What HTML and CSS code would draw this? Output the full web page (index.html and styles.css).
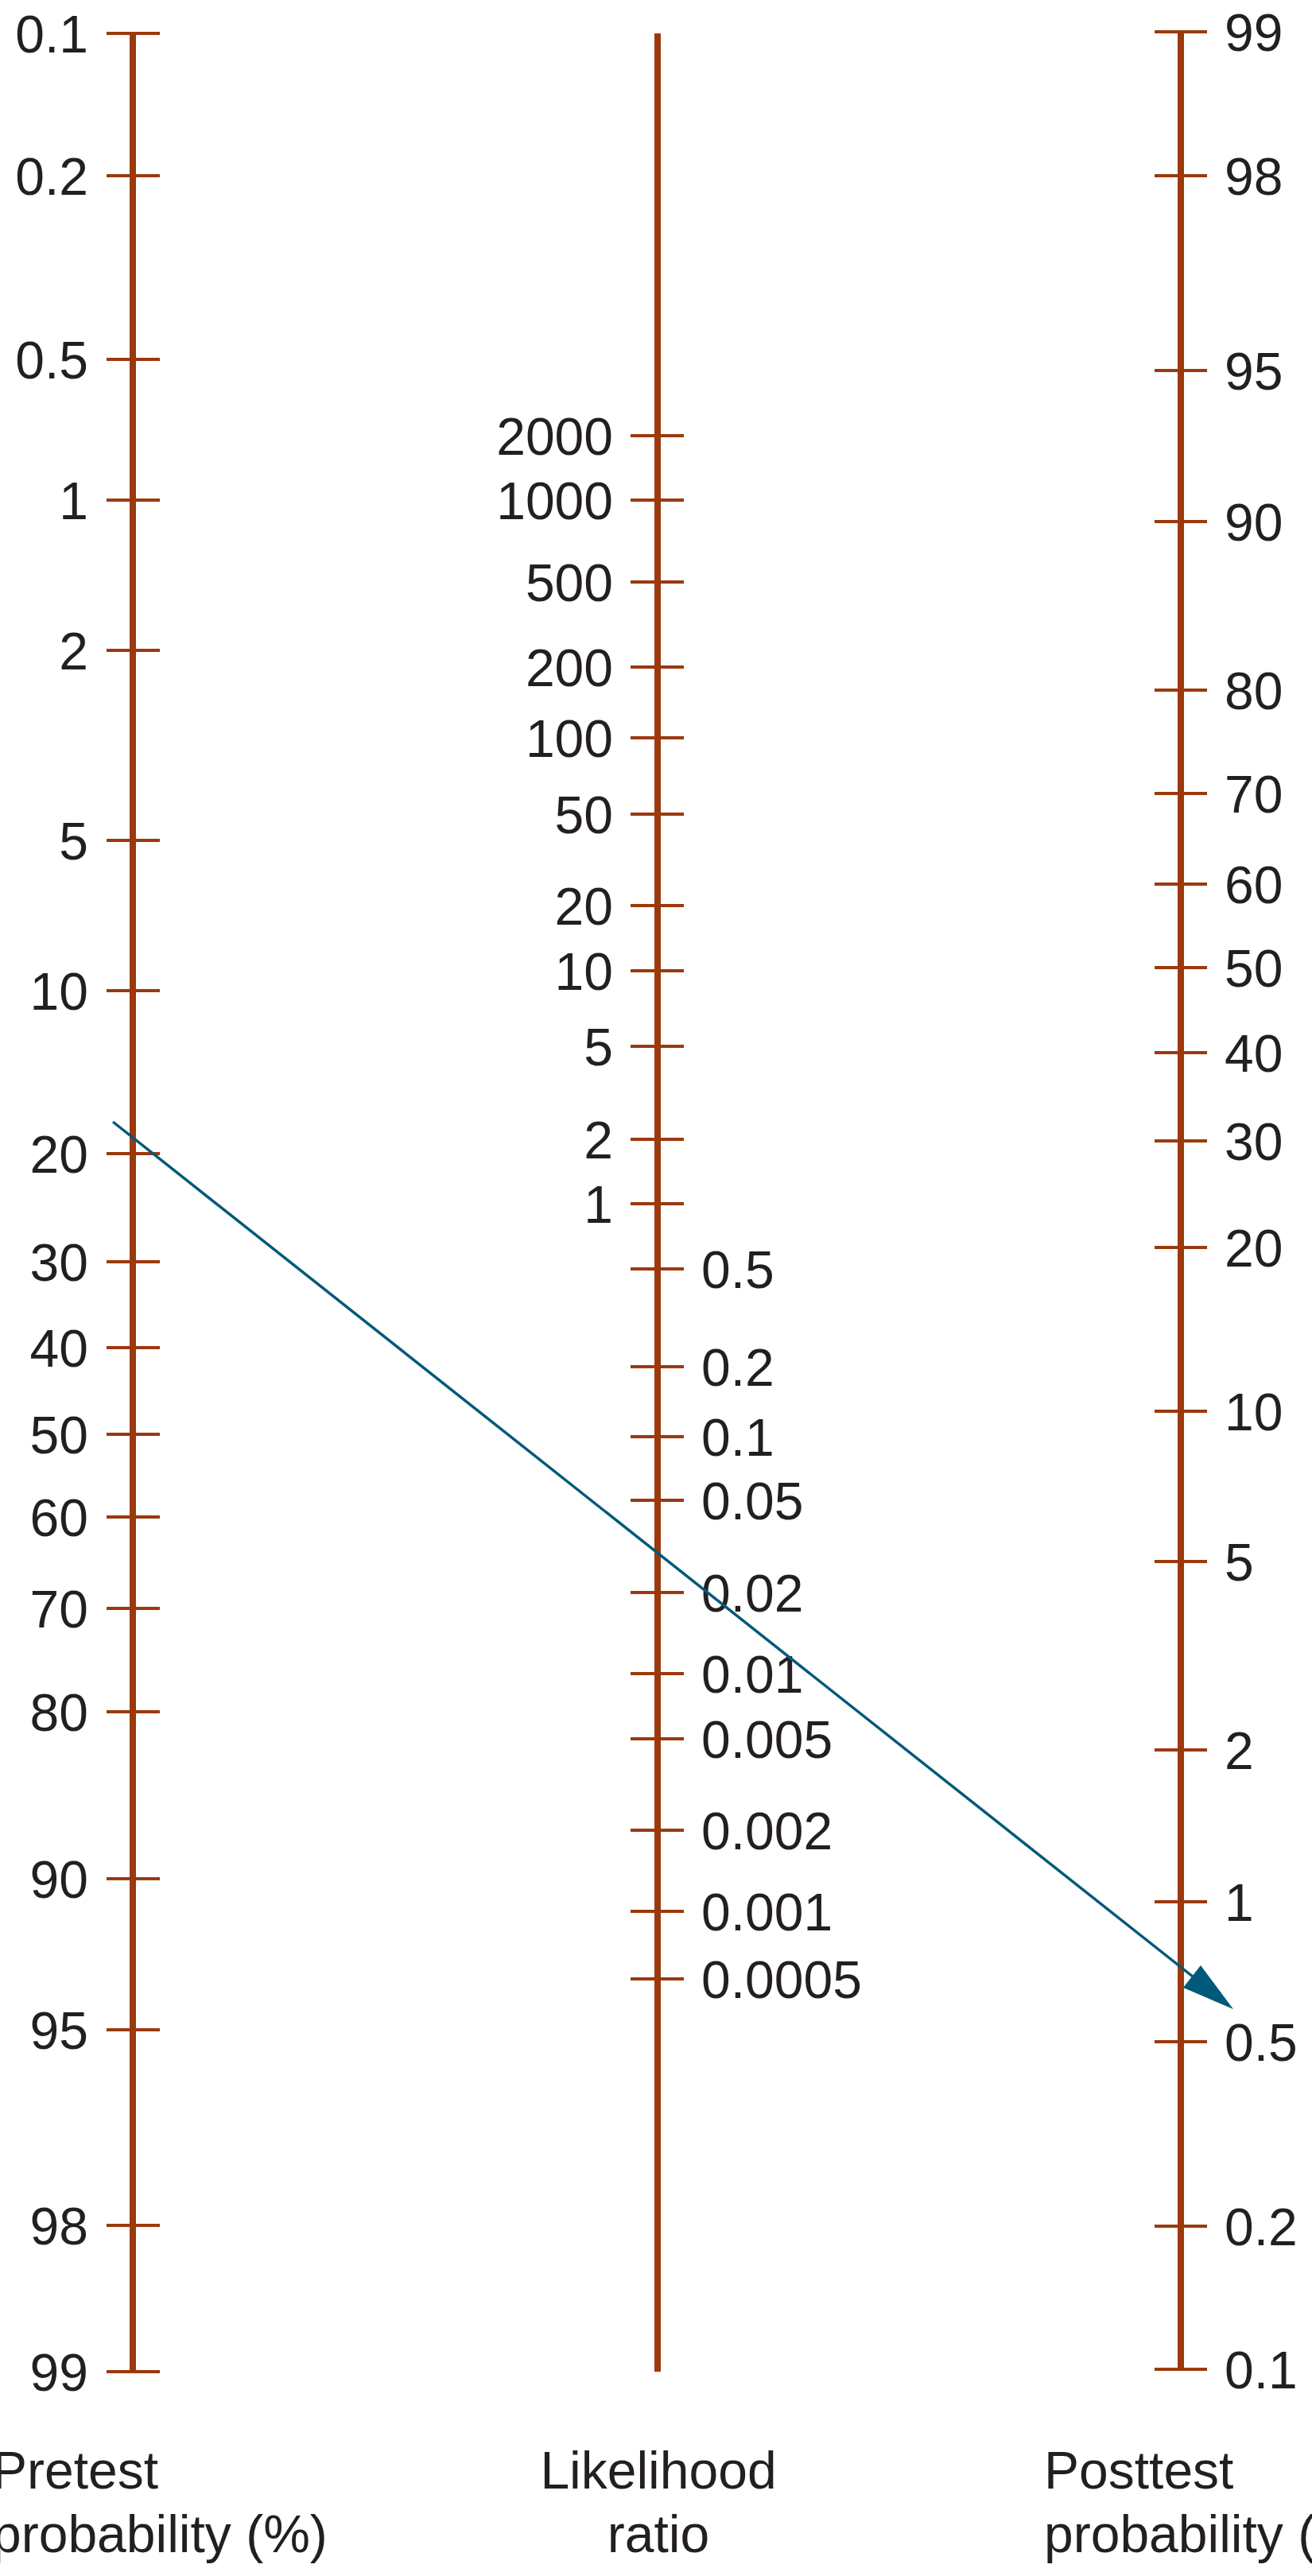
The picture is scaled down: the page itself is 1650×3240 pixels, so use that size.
FILE: index.html
```html
<!DOCTYPE html>
<html lang="en">
<head>
<meta charset="utf-8">
<title>Fagan nomogram</title>
<link rel="stylesheet" href="styles.css">
</head>
<body>
<main class="page">
<svg class="nomogram" width="1650" height="3240" viewBox="0 0 1650 3240" xmlns="http://www.w3.org/2000/svg">
  <!-- Pretest axis -->
  <g class="scale">
    <line class="axis" x1="167" y1="42" x2="167" y2="2983"/>
    <g class="ticks">
      <line x1="134" x2="201" y1="42" y2="42"/>
      <line x1="134" x2="201" y1="221" y2="221"/>
      <line x1="134" x2="201" y1="452" y2="452"/>
      <line x1="134" x2="201" y1="629" y2="629"/>
      <line x1="134" x2="201" y1="818" y2="818"/>
      <line x1="134" x2="201" y1="1057" y2="1057"/>
      <line x1="134" x2="201" y1="1246" y2="1246"/>
      <line x1="134" x2="201" y1="1451" y2="1451"/>
      <line x1="134" x2="201" y1="1587" y2="1587"/>
      <line x1="134" x2="201" y1="1695" y2="1695"/>
      <line x1="134" x2="201" y1="1804" y2="1804"/>
      <line x1="134" x2="201" y1="1908" y2="1908"/>
      <line x1="134" x2="201" y1="2023" y2="2023"/>
      <line x1="134" x2="201" y1="2153" y2="2153"/>
      <line x1="134" x2="201" y1="2363" y2="2363"/>
      <line x1="134" x2="201" y1="2553" y2="2553"/>
      <line x1="134" x2="201" y1="2799" y2="2799"/>
      <line x1="134" x2="201" y1="2983" y2="2983"/>
    </g>
    <g class="labels end">
      <text x="111" y="66">0.1</text>
      <text x="111" y="245">0.2</text>
      <text x="111" y="476">0.5</text>
      <text x="111" y="653">1</text>
      <text x="111" y="842">2</text>
      <text x="111" y="1081">5</text>
      <text x="111" y="1270">10</text>
      <text x="111" y="1475">20</text>
      <text x="111" y="1611">30</text>
      <text x="111" y="1719">40</text>
      <text x="111" y="1828">50</text>
      <text x="111" y="1932">60</text>
      <text x="111" y="2047">70</text>
      <text x="111" y="2177">80</text>
      <text x="111" y="2387">90</text>
      <text x="111" y="2577">95</text>
      <text x="111" y="2823">98</text>
      <text x="111" y="3007">99</text>
    </g>
  </g>

  <!-- Likelihood ratio axis -->
  <g class="scale">
    <line class="axis" x1="827" y1="42" x2="827" y2="2983"/>
    <g class="ticks">
      <line x1="793" x2="860" y1="548" y2="548"/>
      <line x1="793" x2="860" y1="629" y2="629"/>
      <line x1="793" x2="860" y1="732" y2="732"/>
      <line x1="793" x2="860" y1="839" y2="839"/>
      <line x1="793" x2="860" y1="928" y2="928"/>
      <line x1="793" x2="860" y1="1024" y2="1024"/>
      <line x1="793" x2="860" y1="1139" y2="1139"/>
      <line x1="793" x2="860" y1="1221" y2="1221"/>
      <line x1="793" x2="860" y1="1316" y2="1316"/>
      <line x1="793" x2="860" y1="1433" y2="1433"/>
      <line x1="793" x2="860" y1="1514" y2="1514"/>
      <line x1="793" x2="860" y1="1596" y2="1596"/>
      <line x1="793" x2="860" y1="1719" y2="1719"/>
      <line x1="793" x2="860" y1="1807" y2="1807"/>
      <line x1="793" x2="860" y1="1887" y2="1887"/>
      <line x1="793" x2="860" y1="2003" y2="2003"/>
      <line x1="793" x2="860" y1="2105" y2="2105"/>
      <line x1="793" x2="860" y1="2187" y2="2187"/>
      <line x1="793" x2="860" y1="2302" y2="2302"/>
      <line x1="793" x2="860" y1="2404" y2="2404"/>
      <line x1="793" x2="860" y1="2489" y2="2489"/>
    </g>
    <g class="labels end">
      <text x="771" y="572">2000</text>
      <text x="771" y="653">1000</text>
      <text x="771" y="756">500</text>
      <text x="771" y="863">200</text>
      <text x="771" y="952">100</text>
      <text x="771" y="1048">50</text>
      <text x="771" y="1163">20</text>
      <text x="771" y="1245">10</text>
      <text x="771" y="1340">5</text>
      <text x="771" y="1457">2</text>
      <text x="771" y="1538">1</text>
    </g>
    <g class="labels start">
      <text x="882" y="1620">0.5</text>
      <text x="882" y="1743">0.2</text>
      <text x="882" y="1831">0.1</text>
      <text x="882" y="1911">0.05</text>
      <text x="882" y="2027">0.02</text>
      <text x="882" y="2129">0.01</text>
      <text x="882" y="2211">0.005</text>
      <text x="882" y="2326">0.002</text>
      <text x="882" y="2428">0.001</text>
      <text x="882" y="2513">0.0005</text>
    </g>
  </g>

  <!-- Posttest axis -->
  <g class="scale">
    <line class="axis" x1="1485" y1="40" x2="1485" y2="2981"/>
    <g class="ticks">
      <line x1="1452" x2="1518" y1="40" y2="40"/>
      <line x1="1452" x2="1518" y1="221" y2="221"/>
      <line x1="1452" x2="1518" y1="466" y2="466"/>
      <line x1="1452" x2="1518" y1="656" y2="656"/>
      <line x1="1452" x2="1518" y1="868" y2="868"/>
      <line x1="1452" x2="1518" y1="998" y2="998"/>
      <line x1="1452" x2="1518" y1="1112" y2="1112"/>
      <line x1="1452" x2="1518" y1="1217" y2="1217"/>
      <line x1="1452" x2="1518" y1="1324" y2="1324"/>
      <line x1="1452" x2="1518" y1="1435" y2="1435"/>
      <line x1="1452" x2="1518" y1="1569" y2="1569"/>
      <line x1="1452" x2="1518" y1="1775" y2="1775"/>
      <line x1="1452" x2="1518" y1="1964" y2="1964"/>
      <line x1="1452" x2="1518" y1="2201" y2="2201"/>
      <line x1="1452" x2="1518" y1="2392" y2="2392"/>
      <line x1="1452" x2="1518" y1="2568" y2="2568"/>
      <line x1="1452" x2="1518" y1="2800" y2="2800"/>
      <line x1="1452" x2="1518" y1="2980" y2="2980"/>
    </g>
    <g class="labels start">
      <text x="1540" y="64">99</text>
      <text x="1540" y="245">98</text>
      <text x="1540" y="490">95</text>
      <text x="1540" y="680">90</text>
      <text x="1540" y="892">80</text>
      <text x="1540" y="1022">70</text>
      <text x="1540" y="1136">60</text>
      <text x="1540" y="1241">50</text>
      <text x="1540" y="1348">40</text>
      <text x="1540" y="1459">30</text>
      <text x="1540" y="1593">20</text>
      <text x="1540" y="1799">10</text>
      <text x="1540" y="1988">5</text>
      <text x="1540" y="2225">2</text>
      <text x="1540" y="2416">1</text>
      <text x="1540" y="2592">0.5</text>
      <text x="1540" y="2824">0.2</text>
      <text x="1540" y="3004">0.1</text>
    </g>
  </g>

  <!-- Example reading line -->
  <g class="reading">
    <line class="reading-line" x1="142" y1="1411" x2="1500" y2="2486"/>
    <polygon class="reading-head" points="1551,2527 1510,2472 1488,2500"/>
  </g>

  <!-- Scale titles -->
  <g class="titles">
    <text class="title start" x="-10" y="3130">Pretest</text>
    <text class="title start" x="-10" y="3210">probability (%)</text>
    <text class="title middle" x="828" y="3130">Likelihood</text>
    <text class="title middle" x="828" y="3210">ratio</text>
    <text class="title start" x="1313" y="3130">Posttest</text>
    <text class="title start" x="1313" y="3210">probability (%)</text>
  </g>
</svg>
</main>
</body>
</html>
```
FILE: styles.css
```css
html, body {
  margin: 0;
  padding: 0;
  background: #ffffff;
}

.page {
  width: 1650px;
  height: 3240px;
  overflow: hidden;
}

.nomogram {
  display: block;
  font-family: "Liberation Sans", Arial, Helvetica, sans-serif;
}

.axis {
  stroke: #9b390d;
  stroke-width: 8;
  stroke-linecap: butt;
}

.ticks line {
  stroke: #9b390d;
  stroke-width: 4;
  stroke-linecap: butt;
}

.labels text,
.title {
  fill: #231f20;
  font-size: 66px;
}

.end text,
.title.end {
  text-anchor: end;
}

.start text,
.title.start {
  text-anchor: start;
}

.title.middle {
  text-anchor: middle;
}

.reading-line {
  stroke: #00587a;
  stroke-width: 3.5;
  stroke-linecap: butt;
}

.reading-head {
  fill: #00587a;
}
```
